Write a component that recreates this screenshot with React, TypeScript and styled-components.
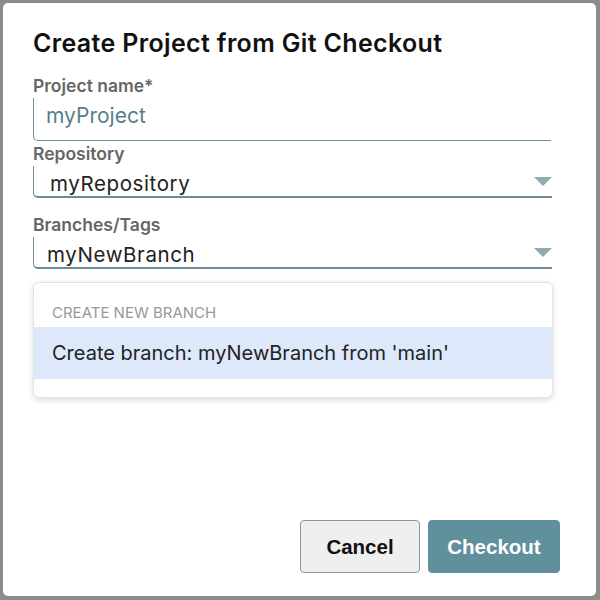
import React from "react";
import styled, { createGlobalStyle } from "styled-components";

const GlobalStyle = createGlobalStyle`
  html, body {
    margin: 0;
    padding: 0;
    background: #8c8c8c;
  }
  * {
    box-sizing: border-box;
  }
`;

const Dialog = styled.div`
  margin: 3px 4px 4px 3px;
  width: 593px;
  height: 593px;
  background: #ffffff;
  border-radius: 5px;
  padding: 25px 44px 23px 30px;
  display: flex;
  flex-direction: column;
  font-family: Inter, "Noto Sans", sans-serif;
`;

const Title = styled.h1`
  margin: 0 0 18px;
  font-size: 25px;
  line-height: 30px;
  font-weight: 600;
  color: #111;
  letter-spacing: 0.35px;
`;

const Label = styled.label`
  display: block;
  font-size: 17.5px;
  line-height: 20px;
  font-weight: 600;
  color: #666;
`;

const TextField = styled.div`
  height: 43px;
  margin-top: 2px;
  margin-right: 1px;
  margin-bottom: 3px;
  border-left: 1px solid #6f8f99;
  border-bottom: 1px solid #6f8f99;
  border-bottom-left-radius: 5px;
  padding: 3px 0 0 12px;
  font-size: 21px;
  line-height: 30px;
  color: #56808c;
`;

const Select = styled.div<{ $indent: number }>`
  position: relative;
  height: 32px;
  margin-top: 2px;
  border-left: 1.5px solid #6f8f99;
  border-bottom: 2px solid #6a8d98;
  border-bottom-left-radius: 5px;
  padding-left: ${(p) => p.$indent}px;
  display: flex;
  align-items: flex-end;
  font-size: 20.5px;
  line-height: 24px;
  color: #222;
  letter-spacing: 0.6px;
`;

const Arrow = styled.span`
  position: absolute;
  right: 0;
  bottom: 10px;
  width: 0;
  height: 0;
  border-left: 9px solid transparent;
  border-right: 9px solid transparent;
  border-top: 9px solid #93aab1;
`;

const Gap = styled.div<{ $h: number }>`
  height: ${(p) => p.$h}px;
`;

const Menu = styled.div`
  margin-top: 13px;
  margin-right: -1px;
  border: 1px solid #e3e3e3;
  border-radius: 6px;
  box-shadow: 0 2px 6px rgba(0, 0, 0, 0.14);
  padding: 21px 0 18px;
  background: #fff;
`;

const GroupTitle = styled.div`
  padding: 0 18px;
  font-size: 15px;
  line-height: 18px;
  color: #999;
  text-transform: uppercase;
  margin-bottom: 5px;
`;

const Option = styled.div<{ $active?: boolean }>`
  height: 52px;
  display: flex;
  align-items: center;
  padding: 0 18px;
  font-size: 20px;
  color: #222;
  background: ${(p) => (p.$active ? "#dde9fb" : "transparent")};
`;

const Footer = styled.div`
  margin-top: auto;
  display: flex;
  justify-content: flex-end;
  gap: 8px;
  margin-right: -8px;
`;

const Button = styled.button<{ $primary?: boolean }>`
  height: 53px;
  padding: 0 14px;
  border-radius: 4px;
  font-family: "Liberation Sans", Arial, sans-serif;
  font-weight: 700;
  font-size: 20.5px;
  cursor: pointer;
  border: 1px solid ${(p) => (p.$primary ? "#5f909c" : "#7d9ca6")};
  background: ${(p) => (p.$primary ? "#5f909c" : "#efefef")};
  color: ${(p) => (p.$primary ? "#ffffff" : "#111")};
`;

export default function App() {
  return (
    <>
      <GlobalStyle />
      <Dialog>
        <Title>Create Project from Git Checkout</Title>
        <Label>Project name*</Label>
        <TextField>myProject</TextField>
        <Label>Repository</Label>
        <Select $indent={16}>
          myRepository
          <Arrow />
        </Select>
        <Gap $h={17} />
        <Label>Branches/Tags</Label>
        <Select $indent={13}>
          myNewBranch
          <Arrow />
        </Select>
        <Menu>
          <GroupTitle>Create new branch</GroupTitle>
          <Option $active>Create branch: myNewBranch from 'main'</Option>
        </Menu>
        <Footer>
          <Button style={{ width: 120 }}>Cancel</Button>
          <Button $primary style={{ width: 132 }}>
            Checkout
          </Button>
        </Footer>
      </Dialog>
    </>
  );
}
